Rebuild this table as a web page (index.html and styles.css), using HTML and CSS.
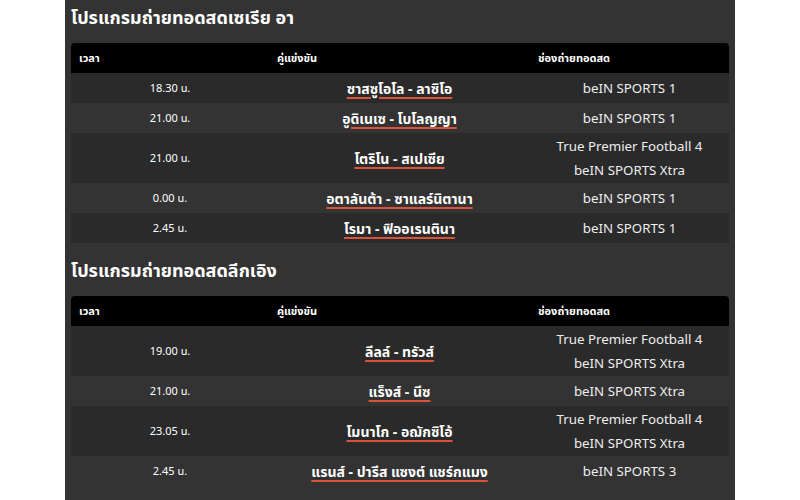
FILE: index.html
```html
<!DOCTYPE html>
<html lang="th">
<head>
<meta charset="utf-8">
<title>โปรแกรมถ่ายทอดสด</title>
<link rel="stylesheet" href="styles.css">
</head>
<body>
<div class="panel">
  <h2 class="title">โปรแกรมถ่ายทอดสดเซเรีย อา</h2>
  <table class="schedule">
    <thead>
      <tr><th class="c-time">เวลา</th><th class="c-match">คู่แข่งขัน</th><th class="c-ch">ช่องถ่ายทอดสด</th></tr>
    </thead>
    <tbody>
      <tr><td class="time">18.30 น.</td><td class="match"><a href="#">ซาสซูโอโล - ลาซิโอ</a></td><td class="ch">beIN SPORTS 1</td></tr>
      <tr><td class="time">21.00 น.</td><td class="match"><a href="#">อูดิเนเซ - โบโลญญา</a></td><td class="ch">beIN SPORTS 1</td></tr>
      <tr><td class="time">21.00 น.</td><td class="match"><a href="#">โตริโน - สเปเซีย</a></td><td class="ch">True Premier Football 4<br>beIN SPORTS Xtra</td></tr>
      <tr><td class="time">0.00 น.</td><td class="match"><a href="#">อตาลันต้า - ซาแลร์นิตานา</a></td><td class="ch">beIN SPORTS 1</td></tr>
      <tr><td class="time">2.45 น.</td><td class="match"><a href="#">โรมา - ฟิออเรนตินา</a></td><td class="ch">beIN SPORTS 1</td></tr>
    </tbody>
  </table>
  <h2 class="title">โปรแกรมถ่ายทอดสดลีกเอิง</h2>
  <table class="schedule">
    <thead>
      <tr><th class="c-time">เวลา</th><th class="c-match">คู่แข่งขัน</th><th class="c-ch">ช่องถ่ายทอดสด</th></tr>
    </thead>
    <tbody>
      <tr><td class="time">19.00 น.</td><td class="match"><a href="#">ลีลล์ - ทรัวส์</a></td><td class="ch">True Premier Football 4<br>beIN SPORTS Xtra</td></tr>
      <tr><td class="time">21.00 น.</td><td class="match"><a href="#">แร็งส์ - นีซ</a></td><td class="ch">beIN SPORTS Xtra</td></tr>
      <tr><td class="time">23.05 น.</td><td class="match"><a href="#">โมนาโก - อฌักซิโอ้</a></td><td class="ch">True Premier Football 4<br>beIN SPORTS Xtra</td></tr>
      <tr><td class="time">2.45 น.</td><td class="match"><a href="#">แรนส์ - ปารีส แซงต์ แชร์กแมง</a></td><td class="ch">beIN SPORTS 3</td></tr>
    </tbody>
  </table>
</div>
</body>
</html>
```
FILE: styles.css
```css
html, body {
  margin: 0;
  padding: 0;
  background: #ffffff;
}
body {
  font-family: "Noto Sans", "Noto Sans Thai", sans-serif;
  color: #eeeeee;
}
.panel {
  width: 670px;
  min-height: 500px;
  margin: 0 auto;
  padding: 6px 6px 0;
  box-sizing: border-box;
  background: #333333;
}
.title {
  margin: 0 0 15px;
  font-size: 18px;
  line-height: 22px;
  font-weight: 700;
  color: #ffffff;
}
.schedule {
  width: 658px;
  border-collapse: collapse;
  margin-bottom: 16px;
  table-layout: fixed;
}
.schedule thead tr {
  background: #000000;
  height: 30px;
}
.schedule th {
  text-align: left;
  font-size: 11px;
  font-weight: 700;
  padding: 0 8px;
  color: #ffffff;
}
.schedule th.c-time { width: 182px; border-top-left-radius: 4px; }
.schedule th.c-match { width: 245px; }
.schedule th.c-ch { border-top-right-radius: 4px; }
.schedule tbody tr {
  height: 30px;
}
.schedule tbody tr:nth-child(odd) {
  background: #2a2a2a;
}
.schedule td {
  text-align: center;
  padding: 1px 4px;
  line-height: 24px;
  vertical-align: middle;
}
.time {
  font-size: 11px;
  color: #ffffff;
}
.match a {
  font-size: 14px;
  font-weight: 700;
  color: #ffffff;
  text-decoration: underline;
  text-decoration-color: #d9533b;
  text-decoration-thickness: 2px;
  text-underline-offset: 3px;
}
.ch {
  font-size: 13.3px;
  color: #eeeeee;
  padding-left: 14px;
}
```
